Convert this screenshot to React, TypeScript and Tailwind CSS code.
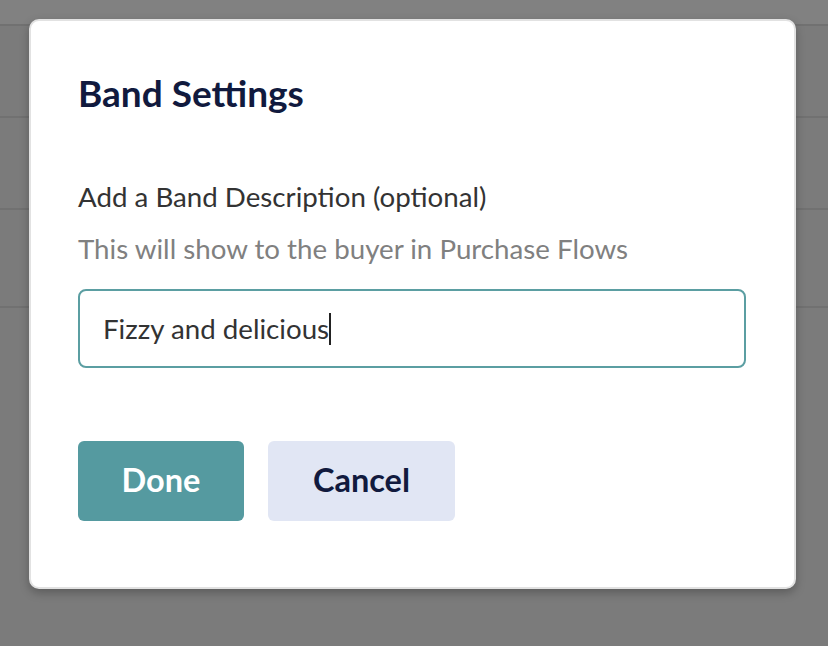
import React from 'react';

const rows = [92, 92, 98];

export default function App() {
  return (
    <div className="relative w-[828px] h-[646px] overflow-hidden bg-[#7b7b7b] font-['Lato',sans-serif]">
      {/* page behind the overlay */}
      <div className="flex flex-col">
        <div className="h-[26px] bg-[#818181] border-b-2 border-[#717171]" />
        {rows.map((h, i) => (
          <div key={i} className="border-b-2 border-[#717171]" style={{ height: h }} />
        ))}
      </div>

      {/* modal */}
      <div className="absolute left-[29px] top-[19px] w-[767px] h-[570px] bg-white rounded-[10px] border-2 border-[#e2e2e2] shadow-[0_4px_10px_rgba(0,0,0,0.25)]">
        <div className="flex flex-col pl-[47px] pr-[48px] pt-[50px]">
          <h1 className="text-[37px] leading-[44px] font-bold text-[#111a3e]">Band Settings</h1>

          <div className="mt-[64px] text-[27.7px] leading-[36px] text-[#333333]">Add a Band Description (optional)</div>
          <div className="mt-[16px] text-[27.7px] leading-[36px] text-[#808080]">This will show to the buyer in Purchase Flows</div>

          <div className="mt-[22px] h-[79px] w-[668px] rounded-[8px] border-2 border-[#5b9ea2] flex items-center pl-[23px]">
            <span className="text-[27.7px] leading-[36px] text-[#333333]">Fizzy and delicious</span>
            <span className="w-[2px] h-[32px] bg-[#222222]" />
          </div>

          <div className="mt-[73px] flex gap-[24px]">
            <button className="w-[166px] h-[80px] rounded-[6px] bg-[#559aa0] text-white text-[32.5px] font-bold pb-[2px]">Done</button>
            <button className="w-[187px] h-[80px] rounded-[6px] bg-[#e1e6f4] text-[#111a3e] text-[32.5px] font-bold pb-[2px]">Cancel</button>
          </div>
        </div>
      </div>
    </div>
  );
}
